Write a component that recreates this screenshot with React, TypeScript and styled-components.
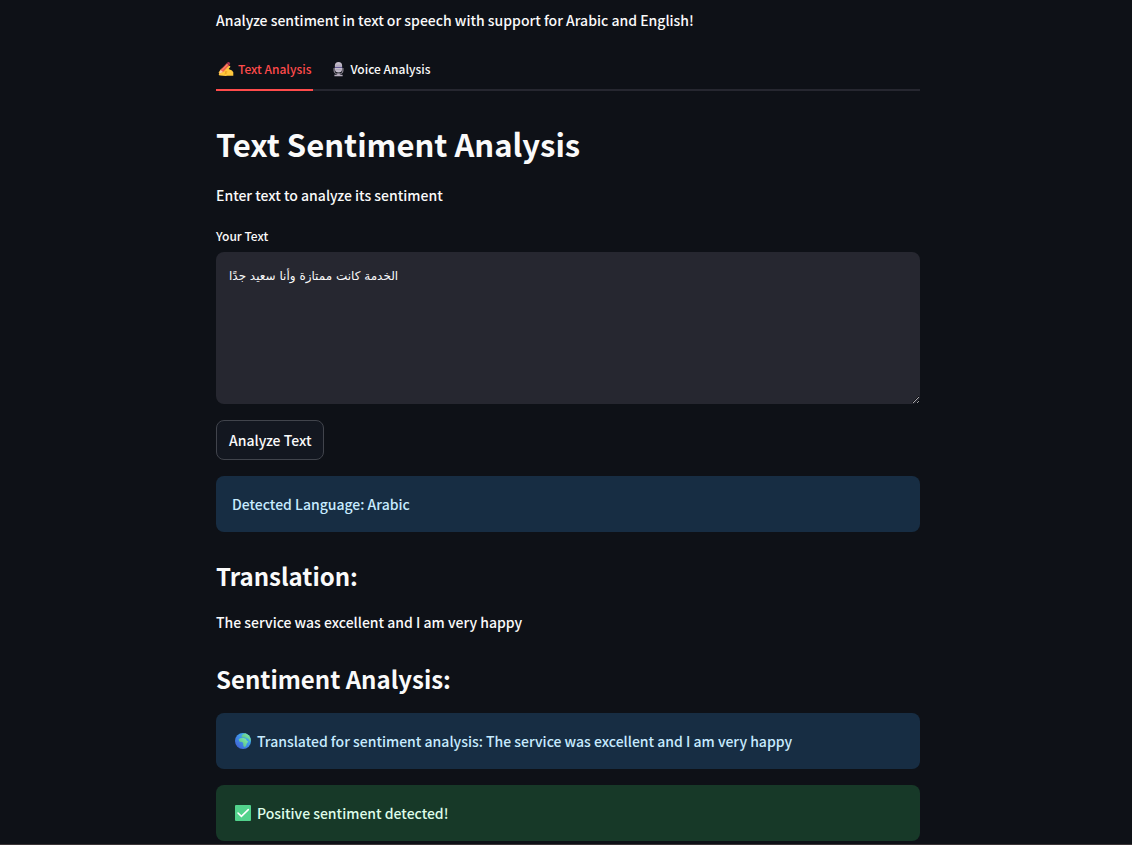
import React, { useState } from "react";
import styled, { createGlobalStyle } from "styled-components";

const GlobalStyle = createGlobalStyle`
  * { box-sizing: border-box; }
  body {
    margin: 0;
    background: #0e1117;
    color: #fafafa;
    color-scheme: dark;
    font-family: "Source Sans Pro", "Noto Sans CJK SC", "DejaVu Sans", sans-serif;
    font-size: 14px;
    font-weight: 500;
    line-height: 24px;
  }
`;

const Page = styled.div`
  min-height: 100vh;
  padding: 8px 12px 0 16px;
  border-bottom: 1px solid #3a3436;
`;

const Content = styled.main`
  display: flex;
  flex-direction: column;
  gap: 16px;
  max-width: 704px;
  margin: 0 auto;
`;

const Paragraph = styled.p`
  margin: 0;
  line-height: 25px;
`;

const TabList = styled.div`
  display: flex;
  gap: 16px;
  border-bottom: 2px solid #262730;
`;

const Tab = styled.button<{ $active: boolean }>`
  display: flex;
  align-items: center;
  gap: 4px;
  height: 42px;
  margin-bottom: -2px;
  padding: 0 2px;
  border: 0;
  border-bottom: 2px solid ${(p) => (p.$active ? "#ff4b4b" : "transparent")};
  background: none;
  color: ${(p) => (p.$active ? "#ff4b4b" : "#fafafa")};
  font: inherit;
  font-size: 12px;
  cursor: pointer;
`;

const Title = styled.h1`
  margin: 0;
  padding: 15px 0 1px;
  font-size: 31px;
  line-height: 44px;
  font-weight: 700;
`;

const Subtitle = styled.h2`
  margin: 0;
  padding: 11px 0 1px;
  font-size: 24px;
  line-height: 34px;
  font-weight: 700;
`;

const Field = styled.div`
  display: flex;
  flex-direction: column;
  gap: 4px;
`;

const Label = styled.label`
  font-size: 12px;
`;

const TextArea = styled.textarea`
  display: block;
  width: 100%;
  height: 152px;
  padding: 12px 13px;
  border: 0;
  border-radius: 8px;
  background: #262730;
  color: #fafafa;
  font-family: "DejaVu Sans", sans-serif;
  font-size: 12px;
  line-height: 24px;
  resize: vertical;
`;

const Button = styled.button`
  align-self: flex-start;
  height: 40px;
  padding: 0 12px;
  border: 1px solid #41444c;
  border-radius: 8px;
  background: #131720;
  color: #fafafa;
  font: inherit;
  cursor: pointer;
`;

const Alert = styled.div<{ $kind: "info" | "success" }>`
  display: flex;
  align-items: center;
  gap: 6px;
  padding: 16px;
  border-radius: 8px;
  background: ${(p) => (p.$kind === "info" ? "#172d43" : "#173928")};
  color: ${(p) => (p.$kind === "info" ? "#c7ebff" : "#dffde9")};
`;

const Icon = styled.svg`
  flex: none;
  margin-left: 3px;
`;

const TabIcon = styled.svg`
  flex: none;
`;

const WritingHand = () => (
  <TabIcon width="16" height="16" viewBox="0 0 16 16" aria-hidden="true">
    <path d="M.6 11.4 2.6 8.4 5.2 6.6 8 6.4l3-1.6c1-.4 1.8.6 1.1 1.4L10.6 8l3.4 1.5 1.3 1.8v3.4H9.4l-1.8.3-5.6-.5c-1.2 0-1.6-1.1-.8-1.8z" fill="#ffc83d" />
    <path d="m6.4 10 2.8.9-2.2.7 1.4.9-2 .5" fill="none" stroke="#e89b1c" strokeWidth=".7" />
    <path d="M2.4 8.9 8.8 2.3l2.3 2.1-6 6.6-3.5 1.5z" fill="#f0624f" />
    <path d="m3.6 9.7 6-6.4" stroke="#ff9a7a" strokeWidth=".7" />
    <path d="m8.8 2.3 1.1-1.2c.8-.8 2.9.9 2.2 1.9l-1 1.4z" fill="#a83250" />
    <path d="m2.4 8.9-.9 3.6 3.6-1.5z" fill="#ffd0a8" />
  </TabIcon>
);

const Microphone = () => (
  <TabIcon width="15" height="16" viewBox="0 0 15 16" aria-hidden="true">
    <path d="M3.1 7v2.4a4.4 3.8 0 0 0 8.8 0V7" fill="none" stroke="#8e8795" strokeWidth="1.2" />
    <path d="M6.2 12.4h2.6v1.4h2.8v1.4H3.4v-1.4h2.8z" fill="#b4acbc" />
    <rect x="3.9" y="1" width="7.2" height="10.6" rx="3.6" fill="#c3bccb" />
    <path d="M3.9 6.4h7.2" stroke="#635994" strokeWidth="1.2" />
    <path d="M4.5 4.2h6M4.5 8.7h6" stroke="#9b93a3" strokeWidth=".6" />
  </TabIcon>
);

const Globe = () => (
  <Icon width="16" height="16" viewBox="0 0 16 16" aria-hidden="true">
    <defs>
      <linearGradient id="ocean" x1="1" y1="0" x2="0" y2="1">
        <stop offset="0" stopColor="#3fc8f4" />
        <stop offset=".5" stopColor="#3f8ee8" />
        <stop offset="1" stopColor="#4256cf" />
      </linearGradient>
      <linearGradient id="land" x1="1" y1="0" x2="0" y2="1">
        <stop offset="0" stopColor="#86f5a8" />
        <stop offset="1" stopColor="#4fae86" />
      </linearGradient>
      <clipPath id="disc"><circle cx="8" cy="8" r="8" /></clipPath>
    </defs>
    <circle cx="8" cy="8" r="8" fill="url(#ocean)" />
    <g clipPath="url(#disc)" fill="url(#land)">
      <path d="M6.4 3.2 7.6 1.4 10.4 0l5 2.4L16 7.6l-1.6.2-1-2-1.8-.6-1.4-.8-1.6.2-1.4-.2z" />
      <path d="M3.6 6.6 5.2 5.2l3-.2 2.6.8 1.2 2.2 1.4.4-1.6 2.2-.8 2.4-1.6 1.2-1.2-1.8v-2.2l-1-1.2-2.6-.2z" />
    </g>
  </Icon>
);

const CheckMark = () => (
  <Icon width="16" height="16" viewBox="0 0 16 16" aria-hidden="true">
    <rect width="16" height="16" rx="1" fill="#52d28c" />
    <path d="m3 8 3.4 3.4L13.3 4.6" fill="none" stroke="#fff" strokeWidth="1.6" strokeLinecap="round" />
  </Icon>
);

export default function App() {
  const [tab, setTab] = useState("text");
  const [text, setText] = useState("الخدمة كانت ممتازة وأنا سعيد جدًا");

  return (
    <>
      <GlobalStyle />
      <Page>
        <Content>
          <Paragraph>Analyze sentiment in text or speech with support for Arabic and English!</Paragraph>
          <TabList role="tablist">
            <Tab role="tab" aria-selected={tab === "text"} $active={tab === "text"} onClick={() => setTab("text")}>
              <WritingHand />
              Text Analysis
            </Tab>
            <Tab role="tab" aria-selected={tab === "voice"} $active={tab === "voice"} onClick={() => setTab("voice")}>
              <Microphone />
              Voice Analysis
            </Tab>
          </TabList>
          <Title>Text Sentiment Analysis</Title>
          <Paragraph>Enter text to analyze its sentiment</Paragraph>
          <Field>
            <Label htmlFor="your-text">Your Text</Label>
            <TextArea id="your-text" dir="ltr" spellCheck={false} value={text} onChange={(e) => setText(e.target.value)} />
          </Field>
          <Button>Analyze Text</Button>
          <Alert $kind="info">Detected Language: Arabic</Alert>
          <Subtitle>Translation:</Subtitle>
          <Paragraph>The service was excellent and I am very happy</Paragraph>
          <Subtitle>Sentiment Analysis:</Subtitle>
          <Alert $kind="info">
            <Globe />
            Translated for sentiment analysis: The service was excellent and I am very happy
          </Alert>
          <Alert $kind="success">
            <CheckMark />
            Positive sentiment detected!
          </Alert>
        </Content>
      </Page>
    </>
  );
}
